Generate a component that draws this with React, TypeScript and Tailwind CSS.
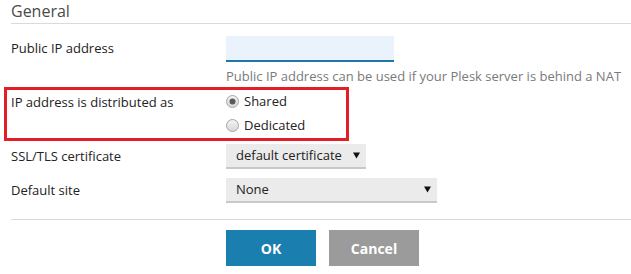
import React from "react";

function Radio({ checked }: { checked?: boolean }) {
  return (
    <svg width="13" height="13" viewBox="0 0 13 13" className="shrink-0">
      <defs>
        <linearGradient id={checked ? "rg1" : "rg2"} x1="0" y1="0" x2="0" y2="1">
          <stop offset="0" stopColor="#f4f4f4" />
          <stop offset="1" stopColor="#d6d6d6" />
        </linearGradient>
      </defs>
      <circle cx="6.5" cy="6.5" r="6" fill={`url(#${checked ? "rg1" : "rg2"})`} stroke="#a6a6a6" strokeWidth="1" />
      {checked && <circle cx="6.5" cy="6.5" r="3" fill="#5a5a5a" />}
    </svg>
  );
}

function Caret() {
  return (
    <svg width="7" height="7" viewBox="0 0 7 7" className="shrink-0">
      <path d="M0 0.5h7L3.5 6.5z" fill="#111" />
    </svg>
  );
}

function Select({ value, width }: { value: string; width: string }) {
  return (
    <div
      className={`flex h-[25px] items-center justify-between border-b-2 border-[#c8c8c8] bg-[#ebebeb] pl-[10px] pr-[6px] text-[13px] text-[#222] ${width}`}
    >
      <span>{value}</span>
      <Caret />
    </div>
  );
}

export default function App() {
  return (
    <div
      className="h-[274px] w-[631px] overflow-hidden bg-white pl-[11px] text-[13px] text-[#222]"
      style={{ fontFamily: '"Open Sans", "Liberation Sans", sans-serif' }}
    >
      <div className="h-[24px] border-b border-[#dadada] text-[16px] leading-[22px] text-[#4a4a4a]">General</div>

      <div className="mt-[12px] flex h-[26px] items-center">
        <div className="w-[215px] pb-[1px]">Public IP address</div>
        <div className="h-[26px] w-[168px] border-b-2 border-[#1f77a8] bg-[#eaf3fb]" />
      </div>
      <div className="mt-[5px] pl-[215px] leading-[18px] text-[#7a7a7a]">
        Public IP address can be used if your Plesk server is behind a NAT
      </div>

      <div className="-ml-[7px] mt-[2px] flex h-[54px] w-[345px] border-[3px] border-[#e31e26] pl-[4px]">
        <div className="w-[215px] pt-[2px] leading-[20px]">IP address is distributed as</div>
        <div className="flex flex-col">
          <label className="flex h-[24px] items-center gap-[5px]">
            <Radio checked />
            <span>Shared</span>
          </label>
          <label className="flex h-[25px] items-center gap-[5px]">
            <Radio />
            <span>Dedicated</span>
          </label>
        </div>
      </div>

      <div className="mt-[3px] flex items-center">
        <div className="w-[215px]">SSL/TLS certificate</div>
        <Select value="default certificate" width="w-[140px]" />
      </div>

      <div className="mt-[9px] flex items-center">
        <div className="w-[215px]">Default site</div>
        <Select value="None" width="w-[211px]" />
      </div>

      <div className="mt-[16px] border-t border-[#dadada]" />

      <div className="mt-[10px] flex gap-[13px] pl-[215px]">
        <button className="h-[36px] w-[90px] bg-[#1a7eae] text-[14px] font-bold text-white">OK</button>
        <button className="h-[36px] w-[90px] bg-[#9b9b9b] text-[14px] font-bold text-white">Cancel</button>
      </div>
    </div>
  );
}
